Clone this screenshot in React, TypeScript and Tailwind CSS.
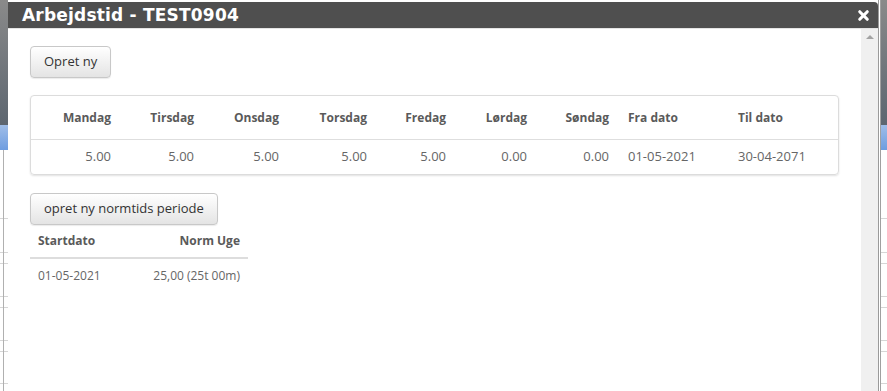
import { X } from 'lucide-react';

const days = [
  { label: 'Mandag', value: '5.00', w: 'w-[80px]' },
  { label: 'Tirsdag', value: '5.00', w: 'w-[83px]' },
  { label: 'Onsdag', value: '5.00', w: 'w-[85px]' },
  { label: 'Torsdag', value: '5.00', w: 'w-[88px]' },
  { label: 'Fredag', value: '5.00', w: 'w-[79px]' },
  { label: 'Lørdag', value: '0.00', w: 'w-[81px]' },
  { label: 'Søndag', value: '0.00', w: 'w-[82px]' },
];

function Btn({ children }: { children: React.ReactNode }) {
  return (
    <button className="h-[32px] px-[13px] rounded-[4px] border border-[#c8c8c8] bg-gradient-to-b from-white to-[#e4e4e4] text-[13px] text-[#333] shadow-[0_1px_1px_rgba(0,0,0,0.08)]">
      {children}
    </button>
  );
}

function PageStrip() {
  return (
    <div className="flex flex-col h-full">
      <div className="h-[125px] bg-gradient-to-b from-[#8a8a8a] to-[#5d6670]" />
      <div className="h-[25px] bg-gradient-to-b from-[#9fbde8] to-[#6e9de0]" />
      <div className="flex-1 bg-white flex flex-col">
        <div className="h-[68px]" />
        <div className="h-px bg-[#d6d6d6]" />
        <div className="h-[33px]" />
        <div className="h-px bg-[#d6d6d6]" />
        <div className="h-[10px]" />
        <div className="h-px bg-[#d6d6d6]" />
        <div className="h-[32px]" />
        <div className="h-px bg-[#d6d6d6]" />
        <div className="h-[10px]" />
        <div className="h-px bg-[#d6d6d6]" />
        <div className="h-[32px]" />
        <div className="h-px bg-[#d6d6d6]" />
        <div className="h-[10px]" />
        <div className="h-px bg-[#d6d6d6]" />
        <div className="h-[31px]" />
        <div className="h-px bg-[#d6d6d6]" />
      </div>
    </div>
  );
}

export default function App() {
  return (
    <div className="w-[887px] h-[391px] overflow-hidden flex bg-white" style={{ fontFamily: '"Open Sans", sans-serif' }}>
      <div className="w-[8px] h-full relative">
        <PageStrip />
        <div className="absolute left-[3px] top-[150px] bottom-0 w-px bg-[#b0b0b0]" />
      </div>

      <div className="w-[871px] h-full pt-[2px] flex flex-col border-r border-[#9a9a9a]">
        <div className="h-[26px] bg-[#4f4f4f] rounded-tr-[4px] flex items-center justify-between pl-[14px] pr-[7px]">
          <span className="text-white font-bold text-[17px] leading-none tracking-[0.2px]" style={{ fontFamily: '"DejaVu Sans", Verdana, sans-serif' }}>
            Arbejdstid - TEST0904
          </span>
          <X className="w-[15px] h-[15px] text-white" strokeWidth={5} />
        </div>
        <div className="h-px bg-[#e4e4e4]" />
        <div className="flex-1 flex min-h-0">
          <div className="flex-1 px-[22px] pt-[17px]">
            <Btn>Opret ny</Btn>

            <div className="mt-[17px] border border-[#dcdcdc] rounded-[4px] shadow-[0_1px_2px_rgba(0,0,0,0.12)]">
              <div className="h-[44px] flex items-center border-b border-[#dedede] text-[12px] font-bold text-[#5a5a5a]">
                {days.map((d) => (
                  <div key={d.label} className={`${d.w} text-right`}>{d.label}</div>
                ))}
                <div className="w-[129px] pl-[19px]">Fra dato</div>
                <div className="flex-1">Til dato</div>
              </div>
              <div className="h-[34px] flex items-center text-[13px] text-[#666]">
                {days.map((d) => (
                  <div key={d.label} className={`${d.w} text-right`}>{d.value}</div>
                ))}
                <div className="w-[129px] pl-[19px]">01-05-2021</div>
                <div className="flex-1">30-04-2071</div>
              </div>
            </div>

            <div className="mt-[18px]">
              <Btn>opret ny normtids periode</Btn>
            </div>

            <div className="w-[218px]">
              <div className="h-[34px] flex items-center justify-between px-[8px] border-b-2 border-[#dddddd] text-[12px] font-bold text-[#5a5a5a]">
                <span>Startdato</span>
                <span>Norm Uge</span>
              </div>
              <div className="h-[34px] flex items-center justify-between px-[8px] text-[12px] text-[#666]">
                <span>01-05-2021</span>
                <span>25,00 (25t 00m)</span>
              </div>
            </div>
          </div>

          <div className="w-[17px] bg-[#f0f0f0] flex justify-center pt-[6px]">
            <div className="w-0 h-0 border-l-[4px] border-r-[4px] border-b-[4px] border-l-transparent border-r-transparent border-b-[#a3a3a3]" />
          </div>
        </div>
      </div>

      <div className="w-px h-full bg-white" />
      <div className="w-px h-full bg-[#a0a0a0]" />
      <div className="flex-1 h-full">
        <PageStrip />
      </div>
    </div>
  );
}
